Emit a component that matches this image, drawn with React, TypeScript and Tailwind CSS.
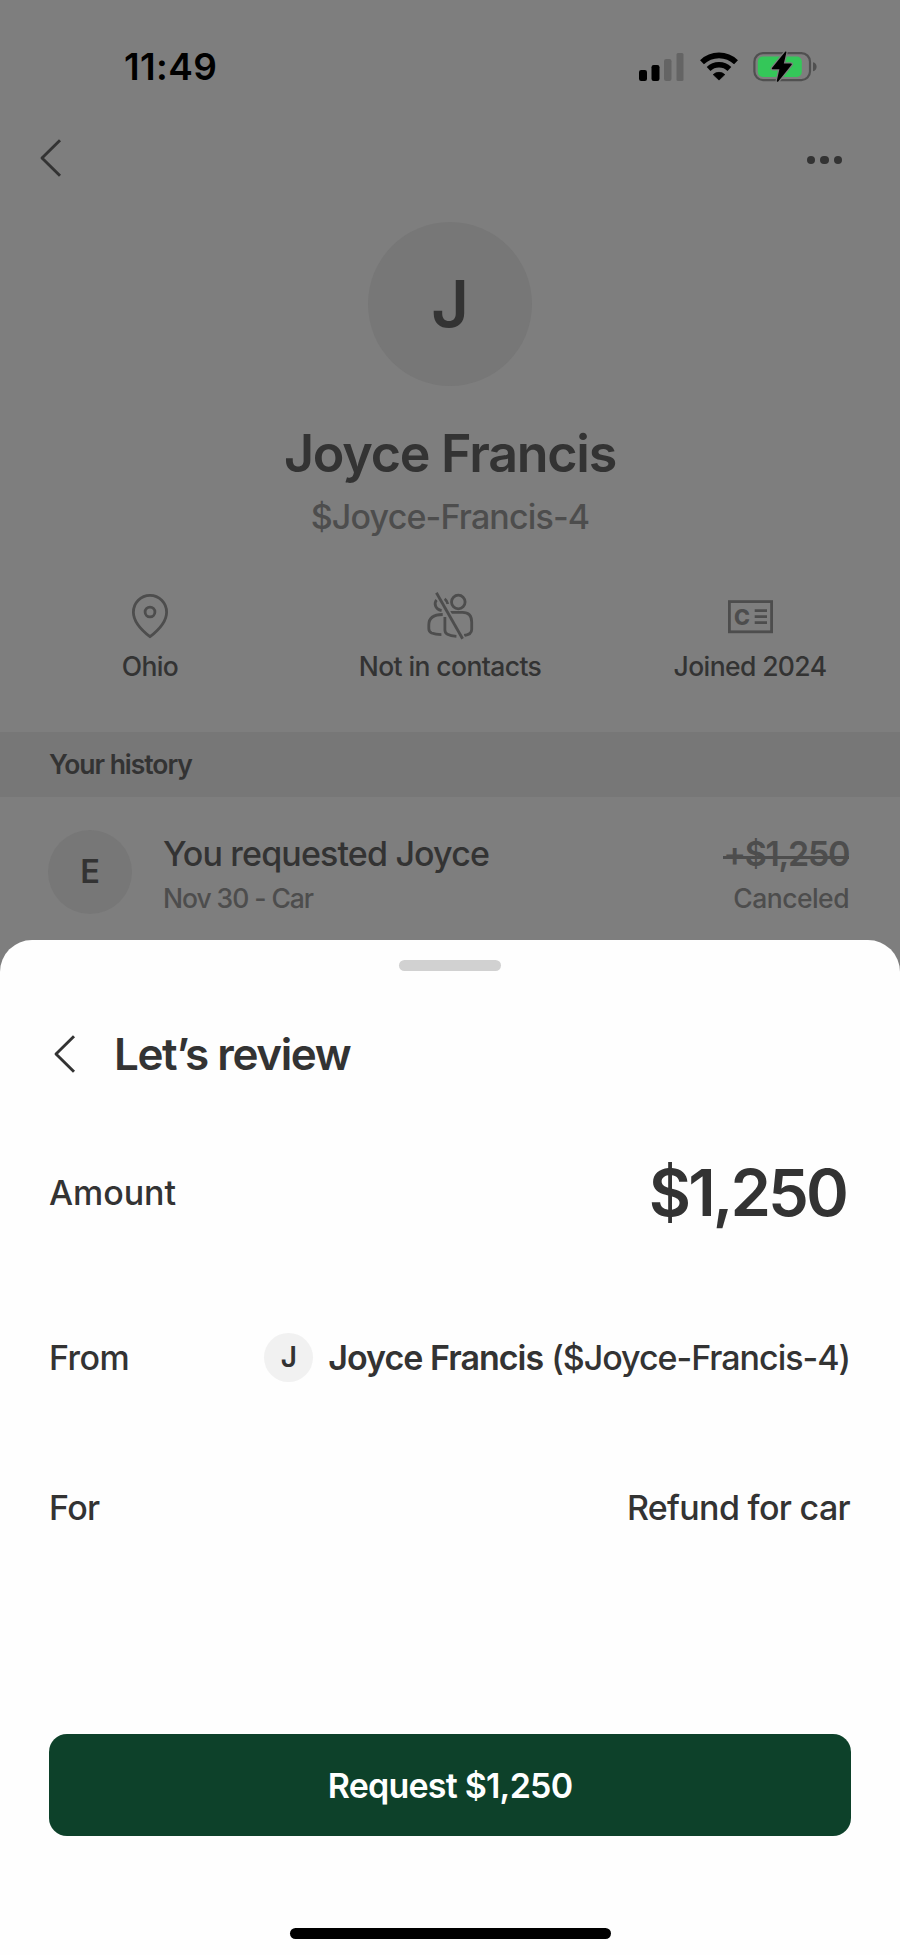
import React from "react";

type Stat = {
  label: string;
  icon: React.ReactNode;
};

const SignalIcon = () => (
  <svg width="45" height="30" viewBox="0 0 45 30">
    <rect x="0" y="18" width="8" height="11" rx="2.2" fill="#000" />
    <rect x="12.5" y="13" width="8" height="16" rx="2.2" fill="#000" />
    <rect x="25" y="7" width="7.5" height="22" rx="2.2" fill="#646464" />
    <rect x="37.5" y="1" width="7" height="28" rx="1.5" fill="#646464" />
  </svg>
);

const WifiIcon = () => (
  <svg width="38" height="30" viewBox="0 0 38 30" fill="none" stroke="#000">
    <path d="M2 10.2A24.5 24.5 0 0 1 36 10.2" strokeWidth="5.6" />
    <path d="M8.6 17A15 15 0 0 1 29.4 17" strokeWidth="5.4" />
    <path
      d="M13.2 22.6A8.6 8.6 0 0 1 24.8 22.6L19 28.1Z"
      fill="#000"
      strokeWidth="0.8"
      strokeLinejoin="round"
    />
  </svg>
);

const BatteryIcon = () => (
  <svg width="64" height="32" viewBox="0 0 64 32">
    <rect
      x="1.4"
      y="2.1"
      width="55.6"
      height="27"
      rx="8.6"
      fill="none"
      stroke="#505050"
      strokeWidth="2.2"
    />
    <path d="M60 11.2C62.2 11.7 63.6 13.5 63.6 15.7C63.6 17.9 62.2 19.7 60 20.2Z" fill="#505050" />
    <rect x="4.8" y="5.5" width="44" height="20.4" rx="5" fill="#34c759" />
    <path
      d="M32.6 1.4L19.6 17.4H27.4L24.6 30L38 13.3H29.8Z"
      fill="#000"
      stroke="#7e7e7e"
      strokeWidth="4"
      strokeLinejoin="round"
    />
    <path
      d="M32.6 1.4L19.6 17.4H27.4L24.6 30L38 13.3H29.8Z"
      fill="#000"
      stroke="#000"
      strokeWidth="1.6"
      strokeLinejoin="round"
    />
  </svg>
);

const BackIcon = () => (
  <svg width="24" height="42" viewBox="0 0 24 42" fill="none">
    <path
      d="M21 3.2L3 21L21 38.8"
      stroke="#333"
      strokeWidth="2.9"
      strokeLinejoin="round"
    />
  </svg>
);

const PinIcon = () => (
  <svg width="48" height="48" viewBox="0 0 48 48" fill="none" stroke="#4d4d4d" strokeWidth="2.8">
    <path
      d="M24 44.7C16 38.5 7.4 30.5 7.4 20.2A16.6 16.9 0 0 1 40.6 20.2C40.6 30.5 32 38.5 24 44.7Z"
      strokeLinejoin="round"
    />
    <circle cx="24" cy="20" r="4.9" />
  </svg>
);

const NoContactIcon = () => (
  <svg width="48" height="48" viewBox="0 0 48 48" fill="none" stroke="#4d4d4d" strokeWidth="2.8">
    <circle cx="32.3" cy="10" r="6.8" />
    <path d="M10.6 7.8C8 10.8 8.6 17.2 15.6 18.6" />
    <path d="M18.6 6.8C20.2 8 21.3 9.8 21.8 12" />
    <path d="M16.7 22.5C9 22.5 2.8 25 2.8 33V36.5Q2.8 39.8 5.6 41Q9.4 42.5 15.4 42.6" />
    <path d="M18.9 25V38Q18.9 41 21.4 42.3Q24.6 44 30.4 44.3" />
    <path d="M24 20.4H36.4Q45.7 20.4 45.7 30V37.5Q45.7 42.6 38 43.5" />
    <path d="M10.4 0.8L36.6 46.8" stroke="#7e7e7e" strokeWidth="6" />
    <path d="M10.4 0.8L36.6 46.8" />
  </svg>
);

const CardIcon = () => (
  <svg width="48" height="48" viewBox="0 0 48 48" fill="none" stroke="#4d4d4d" strokeWidth="2.8">
    <rect x="3.4" y="9.6" width="42.2" height="30.2" />
    <text
      x="16"
      y="32.7"
      textAnchor="middle"
      fontSize="21.5"
      fontWeight="800"
      fill="#4d4d4d"
      stroke="none"
    >
      C
    </text>
    <path d="M28.7 18.7H41M28.7 24.7H41M28.7 30.7H41" />
  </svg>
);

const STATS: Stat[] = [
  { label: "Ohio", icon: <PinIcon /> },
  { label: "Not in contacts", icon: <NoContactIcon /> },
  { label: "Joined 2024", icon: <CardIcon /> },
];

const Profile: React.FC = () => (
  <div className="flex flex-col">
    {/* STATUS BAR */}
    <div className="flex h-[133px] items-center justify-between pl-[124px] pr-[83px]">
      <span className="text-[37px] font-semibold leading-none tracking-[0.01em] text-black">
        11:49
      </span>
      <div className="flex items-center gap-[15.5px]">
        <SignalIcon />
        <WifiIcon />
        <BatteryIcon />
      </div>
    </div>

    {/* NAV */}
    <div className="flex h-[49px] items-center justify-between pl-[39px] pr-[58px]">
      <BackIcon />
      <div className="flex gap-[5px] pt-[5px]">
        <span className="size-[8.4px] rounded-full bg-[#333]" />
        <span className="size-[8.4px] rounded-full bg-[#333]" />
        <span className="size-[8.4px] rounded-full bg-[#333]" />
      </div>
    </div>

    {/* PERSON */}
    <div className="mt-10 flex flex-col items-center">
      <div className="flex size-[164px] items-center justify-center rounded-full bg-[#777] text-[65px] font-semibold">
        J
      </div>
      <h1 className="mt-[40px] text-[52px] font-semibold leading-[56px] tracking-[-0.024em]">
        Joyce Francis
      </h1>
      <p className="mt-[14px] text-[34px] font-medium leading-[41px] tracking-[-0.025em] text-[#4d4d4d]">
        $Joyce-Francis-4
      </p>
    </div>

    {/* STATS */}
    <div className="mt-[55px] grid grid-cols-3">
      {STATS.map((stat) => (
        <div key={stat.label} className="flex flex-col items-center gap-[10px]">
          {stat.icon}
          <span className="text-[26.5px] font-medium leading-8 tracking-[-0.023em]">
            {stat.label}
          </span>
        </div>
      ))}
    </div>

    {/* HISTORY */}
    <div className="mt-[50px] flex h-[65px] items-center bg-[#777] px-[49px] text-[26.5px] font-semibold tracking-[-0.039em]">
      Your history
    </div>
    <div className="mt-[33px] flex pl-[48px] pr-[51px]">
      <div className="flex size-[84px] items-center justify-center rounded-full bg-[#777] text-[32.5px] font-semibold">
        E
      </div>
      <div className="ml-[31px] flex flex-1 flex-col gap-2 pt-1">
        <span className="text-[34px] font-medium leading-[40px] tracking-[-0.025em]">
          You requested Joyce
        </span>
        <span className="text-[26.5px] font-medium leading-8 tracking-[-0.04em] text-[#4d4d4d]">
          Nov 30 - Car
        </span>
      </div>
      <div className="flex flex-col items-end gap-2 pt-1 text-[#4d4d4d]">
        <span className="relative text-[34px] font-semibold leading-[40px] tracking-[-0.04em]">
          +$1,250
          <span className="absolute inset-x-0 top-[22px] h-[2.5px] bg-[#4d4d4d]" />
        </span>
        <span className="text-[26.5px] font-medium leading-8 tracking-[-0.02em]">Canceled</span>
      </div>
    </div>
  </div>
);

const ReviewSheet: React.FC = () => (
  <div className="absolute inset-x-0 bottom-0 flex h-[1015px] flex-col rounded-t-[32px] bg-[#fefefe] px-[49px]">
    <div className="mx-auto mt-5 h-[11px] w-[102px] rounded-full bg-[#d1d1d1]" />

    {/* TITLE */}
    <div className="mt-[59px] flex h-12 items-center pl-1">
      <BackIcon />
      <h2 className="ml-[37px] text-[44px] font-semibold leading-none tracking-[-0.032em]">
        Let’s review
      </h2>
    </div>

    {/* DETAILS */}
    <div className="mt-[74px] flex h-20 items-center justify-between">
      <span className="text-[34px] font-medium tracking-[-0.002em]">Amount</span>
      <span className="mr-[5px] text-[65px] font-semibold leading-none tracking-[-0.045em]">
        $1,250
      </span>
    </div>
    <div className="mt-[100px] flex h-[50px] items-center">
      <span className="text-[34px] font-medium tracking-[-0.017em]">From</span>
      <div className="ml-auto mr-[15px] flex size-[49px] items-center justify-center rounded-full bg-[#f1f1f1] text-[28px] font-semibold">
        J
      </div>
      <span className="mr-px text-[34px] font-medium tracking-[-0.03em]">
        <span className="font-semibold tracking-[-0.029em]">Joyce Francis</span> ($Joyce-Francis-4)
      </span>
    </div>
    <div className="mt-[100px] flex h-[50px] items-center justify-between">
      <span className="text-[34px] font-medium tracking-[-0.02em]">For</span>
      <span className="mr-px text-[34px] font-medium tracking-[-0.02em]">Refund for car</span>
    </div>

    <button className="mt-[202px] h-[102px] rounded-[18px] bg-[#0d412a] text-[34px] font-semibold tracking-[-0.023em] text-white">
      Request $1,250
    </button>
    <div className="mx-auto mt-[92px] h-[11px] w-[321px] rounded-full bg-black" />
  </div>
);

const App: React.FC = () => (
  <div className="relative h-[1955px] w-[900px] overflow-hidden bg-[#7e7e7e] font-['Inter',sans-serif] text-[#333]">
    <Profile />
    <ReviewSheet />
  </div>
);

export default App;
